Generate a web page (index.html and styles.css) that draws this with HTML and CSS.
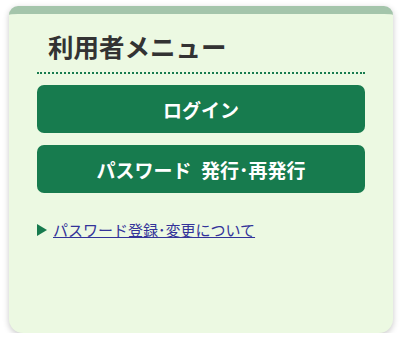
FILE: index.html
```html
<!DOCTYPE html>
<html lang="ja">
<head>
<meta charset="utf-8">
<link rel="stylesheet" href="styles.css">
</head>
<body>
<div class="card">
  <h2 class="title">利用者メニュー</h2>
  <div class="buttons">
    <a class="btn" href="#">ログイン</a>
    <a class="btn" href="#">パスワード&ensp;発行･再発行</a>
  </div>
  <div class="links">
    <span class="tri"></span><a class="link" href="#">パスワード登録･変更について</a>
  </div>
</div>
</body>
</html>
```
FILE: styles.css
```css
html, body {
  margin: 0;
  padding: 0;
  background: #ffffff;
}
body {
  font-family: "Noto Sans CJK JP", "Noto Sans", sans-serif;
}
.card {
  margin: 6px 0 0 9px;
  width: 384px;
  height: 327px;
  box-sizing: border-box;
  background: #ecf9e2;
  border-top: 8px solid #a4c5ab;
  border-radius: 9px 9px 14px 14px;
  box-shadow: 0 2px 6px rgba(0, 0, 0, 0.22);
  padding: 0 28px;
}
.title {
  margin: 0;
  padding: 15px 0 9px 11px;
  font-size: 25.5px;
  line-height: 34px;
  font-weight: bold;
  color: #333333;
  border-bottom: 2px dotted #177b4e;
}
.buttons {
  display: flex;
  flex-direction: column;
  gap: 12px;
  margin-top: 11px;
}
.btn {
  display: flex;
  align-items: center;
  justify-content: center;
  height: 48px;
  border-radius: 7px;
  background: #177b4e;
  color: #ffffff;
  font-size: 19px;
  font-weight: bold;
  text-decoration: none;
}
.links {
  margin-top: 27px;
  display: flex;
  align-items: center;
  height: 20px;
}
.tri {
  width: 0;
  height: 0;
  border-left: 10px solid #177b4e;
  border-top: 6px solid transparent;
  border-bottom: 6px solid transparent;
  margin-right: 6px;
}
.link {
  font-size: 15px;
  line-height: 20px;
  color: #333399;
  text-decoration: underline;
}
```
